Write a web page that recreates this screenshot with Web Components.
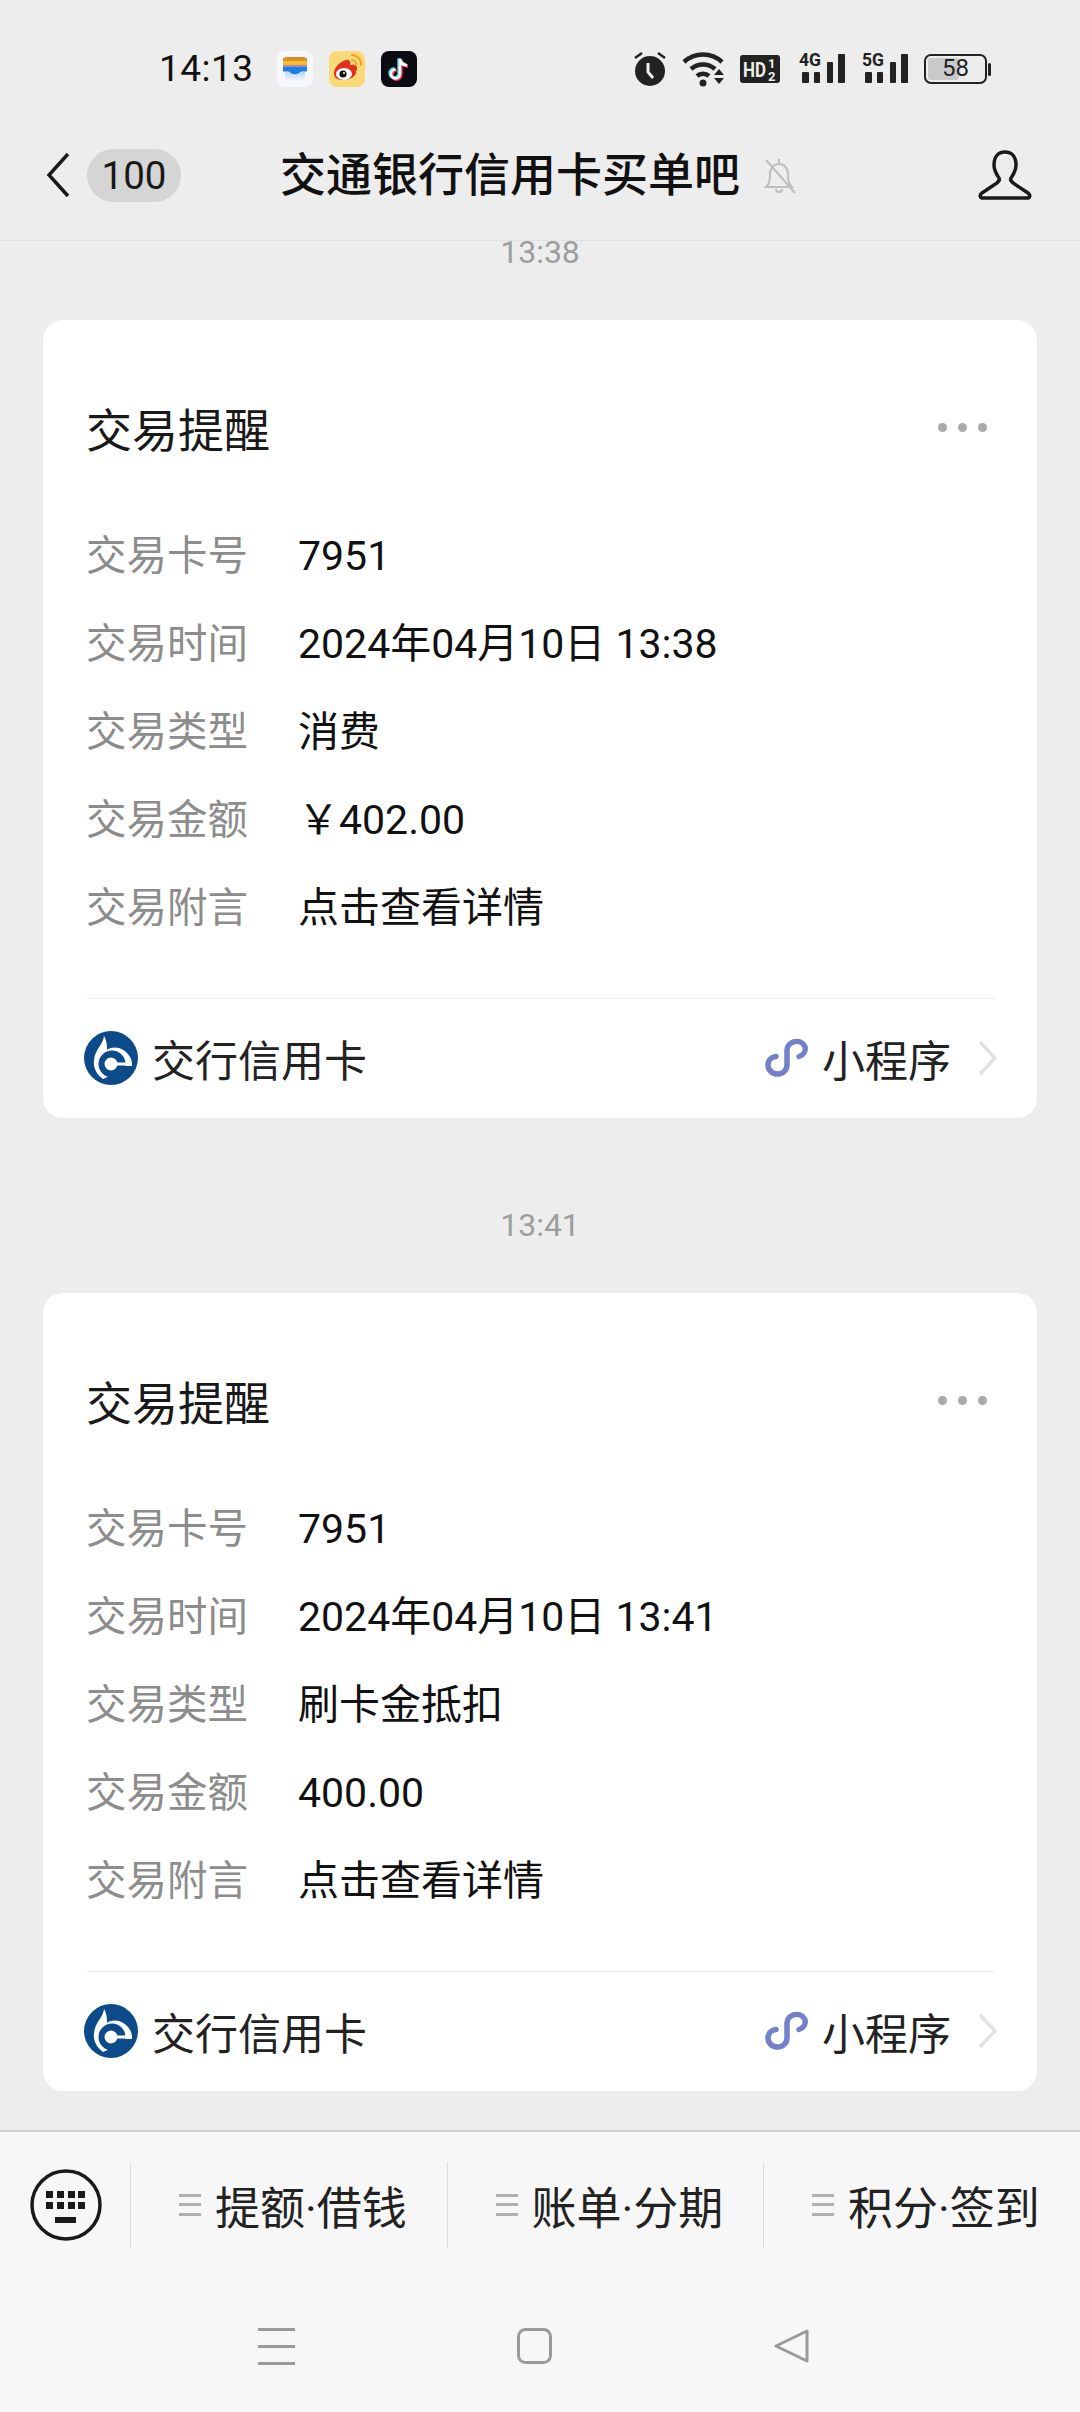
<!DOCTYPE html>
<html lang="zh">
<head>
<meta charset="utf-8">
<title>交通银行信用卡买单吧</title>
<style>
  html, body { margin: 0; padding: 0; background: #ededed; }
  body { font-family: Roboto, "Noto Sans CJK SC", sans-serif; color: #191919; }
  chat-page { width: 1080px; height: 2412px; }
</style>
</head>
<body>
<chat-page>
  <status-bar slot="top"></status-bar>
  <nav-bar slot="top" badge="100">交通银行信用卡买单吧</nav-bar>

  <time-label>13:38</time-label>
  <trade-card>
    <info-row label="交易卡号">7951</info-row>
    <info-row label="交易时间">2024年04月10日 13:38</info-row>
    <info-row label="交易类型">消费</info-row>
    <info-row label="交易金额">￥402.00</info-row>
    <info-row label="交易附言">点击查看详情</info-row>
  </trade-card>

  <time-label>13:41</time-label>
  <trade-card>
    <info-row label="交易卡号">7951</info-row>
    <info-row label="交易时间">2024年04月10日 13:41</info-row>
    <info-row label="交易类型">刷卡金抵扣</info-row>
    <info-row label="交易金额">400.00</info-row>
    <info-row label="交易附言">点击查看详情</info-row>
  </trade-card>

  <menu-bar slot="bottom">
    <menu-item>提额·借钱</menu-item>
    <menu-item>账单·分期</menu-item>
    <menu-item>积分·签到</menu-item>
  </menu-bar>
  <system-nav slot="bottom"></system-nav>
</chat-page>

<script>
  function define(name, html) {
    customElements.define(name, class extends HTMLElement {
      constructor() {
        super();
        const shadow = this.attachShadow({ mode: "open" });
        const template = document.createElement("template");
        template.innerHTML = typeof html === "function" ? html(this) : html;
        shadow.appendChild(template.content.cloneNode(true));
      }
    });
  }

  const signal = label => `
    <svg width="46" height="44" viewBox="0 0 46 44">
      <text x="0" y="19" font-family="'Liberation Sans Narrow', Roboto, sans-serif" font-weight="700" font-size="18" textLength="22" lengthAdjust="spacingAndGlyphs" fill="#222">${label}</text>
      <rect x="3" y="25" width="7" height="11" rx="1" fill="#222"/>
      <rect x="15" y="25" width="6" height="11" rx="1" fill="#222"/>
      <rect x="28" y="15" width="6" height="21" rx="1" fill="#222"/>
      <rect x="39" y="7" width="7" height="29" rx="1" fill="#222"/>
    </svg>`;

  define("chat-page", `
    <style>
      :host { display: flex; flex-direction: column; overflow: hidden; background: #ededed; }
      #list { flex: 1; min-height: 0; overflow: hidden; display: flex; flex-direction: column; }
    </style>
    <slot name="top"></slot>
    <div id="list"><slot></slot></div>
    <slot name="bottom"></slot>
  `);

  define("status-bar", `
    <style>
      :host { display: flex; align-items: center; height: 108px; padding: 30px 0 0 159px; box-sizing: border-box; }
      #time { font-size: 37px; width: 118px; letter-spacing: 0.5px; color: #111; line-height: 40px; }
      #apps { display: flex; gap: 16px; }
      #apps svg { width: 36px; height: 36px; display: block; }
      #sys { margin-left: auto; margin-right: 89px; display: flex; align-items: center; }
      #batt { position: relative; width: 63px; height: 30px; margin-left: 16px; margin-right: 1px; box-sizing: border-box; border: 2.5px solid #222; border-radius: 7px; }
      #batt i { position: absolute; left: 2px; top: 2px; bottom: 2px; width: 31px; background: #c9c9c9; border-radius: 3px; }
      #batt span { position: relative; display: block; text-align: center; font-size: 24px; line-height: 25px; color: #222; }
      #tip { width: 3px; height: 13px; background: #222; border-radius: 2px; }
    </style>
    <div id="time">14:13</div>
    <div id="apps">
      <svg viewBox="0 0 36 36">
        <defs><linearGradient id="pale" x1="0" y1="0" x2="0" y2="1"><stop offset="0" stop-color="#bcd8f8"/><stop offset="1" stop-color="#f4f7fc"/></linearGradient></defs>
        <rect width="36" height="36" rx="8" fill="#f6f8fc"/>
        <path d="M6 10a4 4 0 0 1 4-4h16a4 4 0 0 1 4 4v-1H6z" fill="#d9822b"/>
        <rect x="6" y="7" width="24" height="3" fill="#e08d2c"/><rect x="6" y="10" width="24" height="3.500" fill="#f2c12f"/><rect x="6" y="13.500" width="24" height="2" fill="#ee7a5c"/>
        <path d="M6 15.500h24v5h-5c-2 0-3 3-7 3s-5-3-7-3H6z" fill="#1c7fe6"/>
        <path d="M8 21h3c2 0 3 3 7 3s5-3 7-3h3v4c0 3-2 5-5 5H13c-3 0-5-2-5-5z" fill="url(#pale)"/>
      </svg>
      <svg viewBox="0 0 36 36">
        <rect width="36" height="36" rx="8" fill="#fbd976"/>
        <path d="M5 22c0-6 8-13 13-13 3 0 4 2 3 5 4-1 7 0 7 3 0 1 0 2-1 3 1 5-6 9-12 9S5 28 5 22z" fill="#e0301e"/>
        <ellipse cx="15" cy="23" rx="8" ry="6" fill="#fff"/><circle cx="14" cy="23" r="3.600" fill="#111"/><circle cx="15" cy="22" r="1" fill="#fff"/>
        <path d="M23 4a9 9 0 0 1 9 10M23 9a4 4 0 0 1 4 5" fill="none" stroke="#eda62c" stroke-width="2" stroke-linecap="round"/>
      </svg>
      <svg viewBox="0 0 36 36">
        <rect width="36" height="36" rx="8" fill="#0b0b14"/>
        <path d="M19 8v15a4.500 4.500 0 1 1-4.500-4.500M19 8c.5 4 3 6 7 6.500" fill="none" stroke="#ff2c55" stroke-width="3.400" transform="translate(1 .8)"/>
        <path d="M19 8v15a4.500 4.500 0 1 1-4.500-4.500M19 8c.5 4 3 6 7 6.500" fill="none" stroke="#4fd9e4" stroke-width="3.400" transform="translate(-1 -.8)"/>
        <path d="M19 8v15a4.500 4.500 0 1 1-4.500-4.500M19 8c.5 4 3 6 7 6.500" fill="none" stroke="#fff" stroke-width="2.600"/>
      </svg>
    </div>
    <div id="sys">
      <svg width="34" height="36" viewBox="0 0 34 36"><path d="M2 7l7-5M32 7l-7-5" stroke="#222" stroke-width="2.500"/><circle cx="17" cy="20" r="15" fill="#222"/><path d="M15 12v9l5 6" fill="none" stroke="#eee" stroke-width="3"/></svg>
      <svg width="46" height="36" viewBox="0 0 46 36" style="margin-left:15px"><path d="M2 11a28 28 0 0 1 38 0M9 18a18 18 0 0 1 24 0M15 25a9 9 0 0 1 12 0" fill="none" stroke="#222" stroke-width="4.500"/><circle cx="21" cy="32" r="3.500" fill="#222"/><path d="M32 24l5-6 5 6zM32 27l5 6 5-6z" fill="#222"/></svg>
      <svg width="40" height="28" viewBox="0 0 40 28" style="margin-left:12px"><rect width="40" height="28" rx="3" fill="#222"/><text x="3" y="22" font-family="'Liberation Sans Narrow', Roboto, sans-serif" font-weight="700" font-size="21" textLength="23" lengthAdjust="spacingAndGlyphs" fill="#eee">HD</text><text x="28" y="12.500" font-family="'Liberation Sans Narrow', Roboto, sans-serif" font-weight="700" font-size="13" fill="#eee">1</text><text x="28" y="25.500" font-family="'Liberation Sans Narrow', Roboto, sans-serif" font-weight="700" font-size="13" fill="#eee">2</text></svg>
      <span style="margin-left:19px;display:flex">${signal("4G")}</span>
      <span style="margin-left:17px;display:flex">${signal("5G")}</span>
      <div id="batt"><i></i><span>58</span></div><div id="tip"></div>
    </div>
  `);

  define("nav-bar", el => `
    <style>
      :host { display: block; position: relative; height: 133px; box-sizing: border-box; border-bottom: 1px solid #e2e2e2; }
      #row { display: flex; align-items: center; height: 132px; padding: 2px 0 0 46px; box-sizing: border-box; }
      #badge { width: 94px; height: 53px; margin-left: 17px; border-radius: 27px; background: #d5d5d5; text-align: center; font-size: 38.500px; line-height: 53px; color: #191919; }
      #title { margin-left: 99px; font-size: 46px; line-height: 60px; color: #111; white-space: nowrap; font-weight: 500; }
      #bell { margin-left: 22px; }
      #user { margin-left: auto; margin-right: 48px; }
    </style>
    <div id="row">
      <svg width="24" height="46" viewBox="0 0 24 46"><path d="M22 2L3 23l19 21" fill="none" stroke="#1a1a1a" stroke-width="3.500"/></svg>
      <div id="badge">${el.getAttribute("badge")}</div>
      <div id="title"><slot></slot></div>
      <svg id="bell" width="34" height="38" viewBox="0 0 34 38"><path d="M4 31c3-3 4-5 4-13 0-6 4-10 9-10s9 4 9 10c0 8 1 10 4 13zM17 3v5M14 33a3 3 0 0 0 6 0M4 4l29 33" fill="none" stroke="#bdbdbd" stroke-width="2"/></svg>
      <svg id="user" width="54" height="50" viewBox="0 0 54 50"><path d="M27 2c-7 0-11 5-11 13 0 6 3 10 5 13 1 2 0 3-2 5L4 43c-3 2-2 5 1 5h44c3 0 4-3 1-5L35 33c-2-2-3-3-2-5 2-3 5-7 5-13 0-8-4-13-11-13z" fill="none" stroke="#1a1a1a" stroke-width="3.500"/></svg>
    </div>
  `);

  define("time-label", `
    <style>
      :host { display: block; height: 22px; margin-bottom: 57px; text-align: center; font-size: 32px; line-height: 22px; color: #9d9d9d; }
    </style>
    <slot></slot>
  `);

  define("trade-card", `
    <style>
      :host { display: block; flex: none; box-sizing: border-box; width: 994px; height: 798px; margin: 0 43px 96px; padding: 81px 42px 0 44px; background: #fff; border-radius: 20px; }
      #head { display: flex; align-items: center; justify-content: space-between; height: 60px; margin-bottom: 51px; }
      #title { font-size: 46px; line-height: 60px; color: #191919; margin-left: -1px; }
      #more { display: flex; gap: 11px; margin-right: 8px; margin-top: -8px; }
      #more i { width: 9px; height: 9px; border-radius: 50%; background: #aaa; }
      #rows { display: block; height: 440px; margin-bottom: 46px; }
      #foot { display: flex; align-items: center; height: 120px; box-sizing: border-box; border-top: 1px solid #ececec; padding-bottom: 1px; }
      #logo { margin-left: -3px; }
      #name { margin-left: 14px; font-size: 43px; color: #222; }
      #mini { margin-left: auto; }
      #kind { margin-left: 13px; font-size: 43px; color: #222; }
      #arrow { margin-left: 27px; margin-right: -3px; }
    </style>
    <div id="head"><div id="title">交易提醒</div><div id="more"><i></i><i></i><i></i></div></div>
    <div id="rows"><slot></slot></div>
    <div id="foot">
      <svg id="logo" width="54" height="54" viewBox="0 0 54 54">
        <circle cx="27" cy="27" r="27" fill="#0d4a8a"/>
        <path d="M20 5C22 8 23 12 23 19C30 14 41 17 46 26C47.500 28 48 31 48 35L40 35L26 45L19 48C12 43 9 36 10 29C11 18 19 14 20 5Z" fill="#fff"/>
        <circle cx="28" cy="33" r="13.500" fill="#0d4a8a"/>
        <circle cx="27" cy="33" r="6.500" fill="#fff"/>
        <path d="M27 31.500h21v3H27z" fill="#fff"/>
      </svg>
      <div id="name">交行信用卡</div>
      <svg id="mini" width="44" height="38" viewBox="0 0 44 38"><path d="M34 17.500C38.500 16 41 12 40 8C38 3 33 2 30 2.500C25 3.500 22 7 22 11V26C22 31 18 35 13 35C7 35 3 31 3 26C3 21 7 18 11 17.500" fill="none" stroke="#7480c8" stroke-width="5.500" stroke-linecap="round"/></svg>
      <div id="kind">小程序</div>
      <svg id="arrow" width="20" height="36" viewBox="0 0 20 36"><path d="M2 2l15 16L2 34" fill="none" stroke="#e2e2e2" stroke-width="3.500"/></svg>
    </div>
  `);

  define("info-row", el => `
    <style>
      :host { display: flex; align-items: center; height: 88px; font-size: 41px; line-height: 52px; }
      #label { width: 211px; color: #8c8c8c; flex: none; font-size: 40.500px; margin-left: -1px; padding-right: 1px; }
      #value { color: #111; white-space: nowrap; }
    </style>
    <div id="label">${el.getAttribute("label")}</div>
    <div id="value"><slot></slot></div>
  `);

  define("menu-bar", `
    <style>
      :host { display: flex; align-items: center; height: 154px; box-sizing: border-box; padding: 0 0 6px 30px; background: #f7f7f7; border-top: 2px solid #cfcfcf; }
      #kbd { flex: none; width: 100px; }
      #kbd svg { display: block; }
      #items { display: flex; flex: 1; }
    </style>
    <div id="kbd"><svg width="72" height="74" viewBox="0 0 72 74"><circle cx="36" cy="37" r="34" fill="none" stroke="#1a1a1a" stroke-width="3.500"/><path d="M16 23h7v7h-7zM27 23h7v7h-7zM38 23h7v7h-7zM48 23h7v7h-7zM16 34h7v7h-7zM27 34h7v7h-7zM38 34h7v7h-7zM48 34h7v7h-7zM25 49h21v6H25z" fill="#1a1a1a"/></svg></div>
    <div id="items"><slot></slot></div>
  `);

  define("menu-item", `
    <style>
      :host { display: flex; align-items: center; width: 316.500px; height: 86px; padding-left: 48px; box-sizing: border-box; border-left: 1px solid #dedede; font-size: 45px; color: #222; white-space: nowrap; }
      svg { margin-right: 14px; flex: none; }
    </style>
    <svg width="22" height="22" viewBox="0 0 22 22"><path d="M0 0h22v3H0zM0 9h22v3H0zM0 19h22v3H0z" fill="#b0b0b0"/></svg>
    <slot></slot>
  `);

  define("system-nav", `
    <style>
      :host { display: flex; align-items: center; height: 128px; box-sizing: border-box; padding: 0 0 4px 258px; background: #f7f7f7; }
      svg { display: block; flex: none; }
      #home { margin-left: 222px; }
      #back { margin-left: 222px; }
    </style>
    <svg width="37" height="37" viewBox="0 0 37 37"><path d="M0 0h37v3H0zM0 17h37v3H0zM0 34h37v3H0z" fill="#9a9a9a"/></svg>
    <svg id="home" width="35" height="36" viewBox="0 0 35 36"><rect x="1.500" y="1.500" width="32" height="33" rx="7" fill="none" stroke="#9a9a9a" stroke-width="3"/></svg>
    <svg id="back" width="36" height="36" viewBox="0 0 36 36"><path d="M33 3L2 18l31 15z" fill="none" stroke="#9a9a9a" stroke-width="3" stroke-linejoin="round"/></svg>
  `);
</script>
</body>
</html>
